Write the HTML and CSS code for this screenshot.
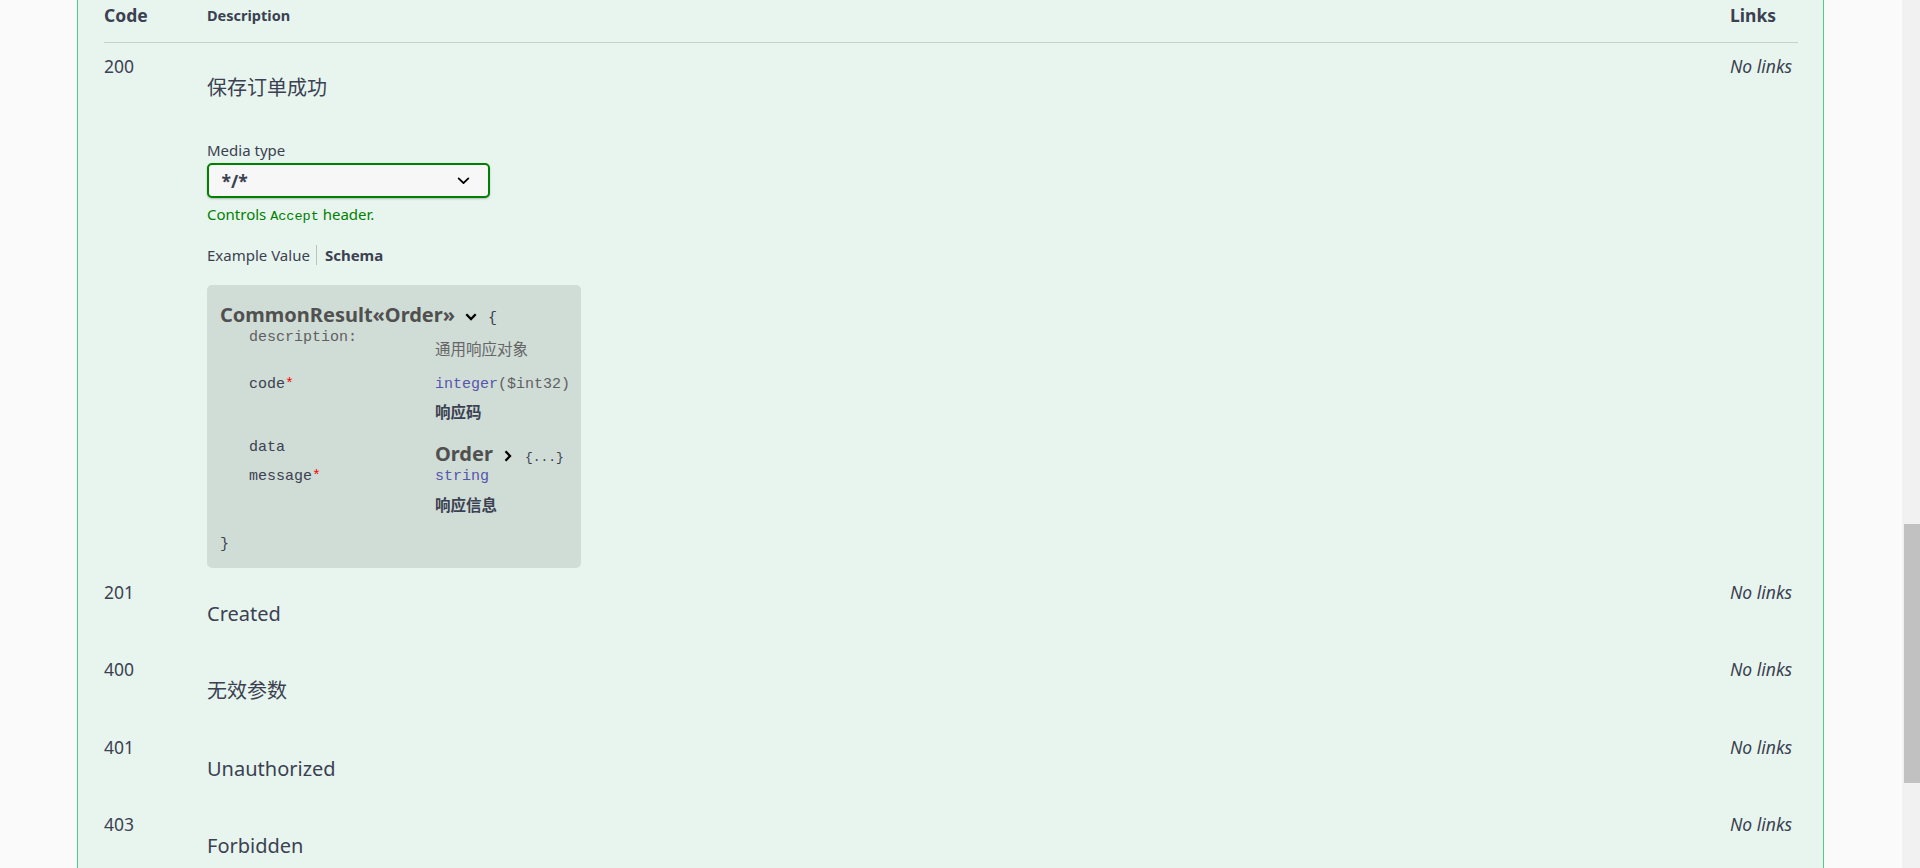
FILE: index.html
```html
<!DOCTYPE html>
<html>

	<head>
		<meta charset="UTF-8">
		<title>Responses</title>
		<link rel="stylesheet" href="styles.css">
	</head>

	<body>
		<div class="page">
			<main class="main">
				<section class="opblock">
					<!-- 表头 -->
					<div class="resp-head">
						<div class="col-code">Code</div>
						<div class="col-desc head-desc">Description</div>
						<div class="col-links">Links</div>
					</div>

					<!-- 200 -->
					<div class="resp-row">
						<div class="col-code">200</div>
						<div class="col-desc">
							<p class="resp-text resp-text-first">保存订单成功</p>
							<div class="media-label">Media type</div>
							<div class="media-select">
								<span>*/*</span>
								<svg width="25" height="25" viewBox="0 0 20 20"><path d="M13.418 7.859a.695.695 0 01.978 0 .68.68 0 010 .969l-3.908 3.83a.697.697 0 01-.979 0l-3.908-3.830a.68.68 0 010-.969.695.695 0 01.978 0L10 11l3.418-3.141z"/></svg>
							</div>
							<div class="media-hint">Controls <code>Accept</code> header.</div>
							<ul class="tabs">
								<li class="tab-first">Example Value</li>
								<li class="tab-active">Schema</li>
							</ul>
							<div class="model-box">
								<div class="model-title">CommonResult«Order»<svg class="toggle-down" width="12" height="8" viewBox="0 0 12 8"><polyline points="1.3,1.3 6,6 10.7,1.3"/></svg><span class="brace">{</span></div>
								<div class="prop prop-desc">
									<div class="prop-name muted">description:</div>
									<div class="prop-val"><p class="prop-note muted-note">通用响应对象</p></div>
								</div>
								<div class="prop prop-code">
									<div class="prop-name">code<span class="star">*</span></div>
									<div class="prop-val">
										<div class="prop-type">integer<span class="prop-format">($int32)</span></div>
										<p class="prop-note note-code">响应码</p>
									</div>
								</div>
								<div class="prop prop-data">
									<div class="prop-name">data</div>
									<div class="prop-val">
										<div class="ref-title">Order<svg class="toggle-right" width="8" height="12" viewBox="0 0 8 12"><polyline points="1.5,1.3 6,6 1.5,10.7"/></svg><span class="collapsed">{...}</span></div>
									</div>
								</div>
								<div class="prop prop-message">
									<div class="prop-name">message<span class="star">*</span></div>
									<div class="prop-val">
										<div class="prop-type">string</div>
										<p class="prop-note note-message">响应信息</p>
									</div>
								</div>
								<div class="brace-close">}</div>
							</div>
						</div>
						<div class="col-links"><i>No links</i></div>
					</div>

					<div class="resp-row">
						<div class="col-code">201</div>
						<div class="col-desc"><p class="resp-text">Created</p></div>
						<div class="col-links"><i>No links</i></div>
					</div>

					<div class="resp-row">
						<div class="col-code">400</div>
						<div class="col-desc"><p class="resp-text">无效参数</p></div>
						<div class="col-links"><i>No links</i></div>
					</div>

					<div class="resp-row">
						<div class="col-code">401</div>
						<div class="col-desc"><p class="resp-text">Unauthorized</p></div>
						<div class="col-links"><i>No links</i></div>
					</div>

					<div class="resp-row">
						<div class="col-code">403</div>
						<div class="col-desc"><p class="resp-text">Forbidden</p></div>
						<div class="col-links"><i>No links</i></div>
					</div>
				</section>
			</main>
			<div class="scrollbar">
				<div class="thumb"></div>
			</div>
		</div>
	</body>

</html>
```

FILE: styles.css
```css
body {
	margin: 0;
	background: #fafafa;
	color: #3b4151;
	font-family: "Noto Sans", "Noto Sans CJK SC", sans-serif;
	overflow: hidden;
}

.page {
	display: flex;
	height: 868px;
	overflow: hidden;
}

.main {
	flex: 1;
}

.opblock {
	margin: 0 78px 0 77px;
	height: 868px;
	box-sizing: border-box;
	padding: 0 25px 0 26px;
	background: #e8f5ef;
	border-left: 1px solid #49cc90;
	border-right: 1px solid #49cc90;
}

.resp-head,
.resp-row {
	display: grid;
	grid-template-columns: 103px 1fr 68px;
}

.resp-head {
	align-items: start;
	padding: 3px 0 15px;
	border-bottom: 1px solid #c5d1cf;
	font-weight: 700;
	font-size: 17.5px;
	line-height: 24px;
}

.head-desc {
	font-size: 14.5px;
	line-height: 22px;
	padding-top: 1px;
}

.resp-row {
	align-items: start;
	padding: 11px 0 1px;
	font-size: 17.5px;
	line-height: 24px;
}

.col-links i {
	font-style: italic;
	white-space: nowrap;
}

.resp-text {
	margin: 20px 0 18.5px;
	font-size: 20px;
	line-height: 27px;
}

.resp-text-first {
	margin-bottom: 39px;
}

/* media type */
.media-label {
	font-size: 15px;
	line-height: 20px;
	margin-bottom: 3px;
}

.media-select {
	width: 283px;
	height: 35px;
	box-sizing: border-box;
	display: flex;
	align-items: center;
	justify-content: space-between;
	padding: 0 12.5px;
	background: #f7f7f7;
	border: 2.5px solid #008000;
	border-radius: 5px;
	box-shadow: 0 1px 2px 0 rgba(0, 0, 0, .25);
	font-weight: 700;
	font-size: 17.5px;
}

.media-select svg {
	display: block;
}

.media-hint {
	margin-top: 6px;
	font-size: 15px;
	line-height: 20px;
	color: #008000;
}

.media-hint code {
	font-family: "Liberation Mono", monospace;
	font-size: 13.5px;
	line-height: 1;
}

.tabs {
	display: flex;
	list-style: none;
	margin: 21px 0 20px;
	padding: 0;
	font-size: 15px;
	line-height: 20px;
}

.tab-first {
	position: relative;
	padding-right: 15px;
}

.tab-first::after {
	content: "";
	position: absolute;
	right: 7.5px;
	top: 0;
	width: 1px;
	height: 100%;
	background: rgba(0, 0, 0, .2);
}

.tab-active {
	font-weight: 700;
}

/* schema */
.model-box {
	width: 374px;
	box-sizing: border-box;
	padding: 18px 13px 14px;
	background: rgba(0, 0, 0, .1);
	border-radius: 5px;
	font-family: "Liberation Mono", "Noto Sans CJK SC", monospace;
	font-size: 15px;
	line-height: 18px;
}

.model-title,
.ref-title {
	font-family: "Noto Sans", sans-serif;
	font-size: 20px;
	font-weight: 700;
	line-height: 24px;
	color: #505050;
	white-space: nowrap;
}

.toggle-down {
	margin-left: 10px;
	vertical-align: 1px;
}

.toggle-down polyline,
.toggle-right polyline {
	fill: none;
	stroke: #000;
	stroke-width: 2.3;
}

.toggle-right {
	margin-left: 11px;
	vertical-align: -1px;
}

.brace {
	font-family: "Liberation Mono", monospace;
	font-size: 15px;
	font-weight: 400;
	line-height: 1;
	color: #3b4151;
	margin-left: 11px;
}

.brace-close {
	margin: 22.5px 0 0;
	color: #3b4151;
}

.collapsed {
	font-family: "Liberation Mono", monospace;
	font-size: 13px;
	font-weight: 400;
	line-height: 1;
	color: #3b4151;
	margin-left: 13px;
}

.prop {
	display: grid;
	grid-template-columns: 186px 1fr;
	padding-left: 29px;
	align-items: start;
}

.prop-desc {
	margin-top: 2px;
}

.prop-code {
	margin-top: 18.7px;
}

.prop-data {
	margin-top: 18.7px;
}

.prop-message {
	margin-top: 1.8px;
}

.prop-name {
	color: #3b4151;
}

.muted {
	color: #606060;
}

.star {
	color: red;
}

.prop-type {
	color: #55a;
}

.prop-format {
	color: #606060;
}

.prop-note {
	margin: 0;
	font-family: "Noto Sans CJK SC", sans-serif;
	font-size: 15.5px;
	line-height: 18px;
	font-weight: 700;
	color: #3b4151;
}

.muted-note {
	margin-top: 10px;
	font-weight: 400;
	color: #666;
}

.note-code {
	margin-top: 8.5px;
}

.note-message {
	margin-top: 9.7px;
}

.ref-title {
	margin-top: 3px;
}

/* 滚动条 */
.scrollbar {
	width: 18px;
	background: #f1f1f1;
}

.thumb {
	margin: 524px 0 0 2px;
	height: 259px;
	background: #c1c1c1;
}
```
